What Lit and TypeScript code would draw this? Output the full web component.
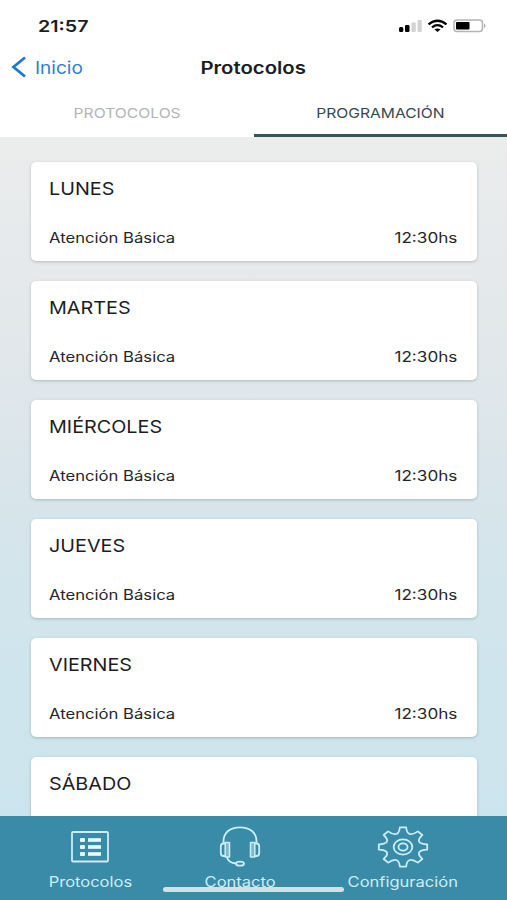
import { LitElement, html, css, svg, nothing } from "lit";
import { customElement } from "lit/decorators.js";

interface Day { name: string; plan?: string; time?: string }

const plan = "Atención Básica";
const time = "12:30hs";
const DAYS: Day[] = [
  { name: "LUNES", plan, time },
  { name: "MARTES", plan, time },
  { name: "MIÉRCOLES", plan, time },
  { name: "JUEVES", plan, time },
  { name: "VIERNES", plan, time },
  { name: "SÁBADO" },
];

/* Outline of an eight-toothed gear centred on the origin. */
function gearPath(): string {
  const at = (x: number, y: number, turn: number) => {
    const a = (turn * Math.PI) / 4;
    const px = x * Math.cos(a) - y * Math.sin(a);
    const py = x * Math.sin(a) + y * Math.cos(a);
    return `${px.toFixed(2)} ${py.toFixed(2)}`;
  };
  let d = `M${at(-3, -22.8, 0)}`;
  for (let i = 0; i < 8; i++) {
    d += `L${at(3, -22.8, i)}C${at(3.6, -14.2, i)} ${at(-3.6, -14.2, i + 1)} ${at(-3, -22.8, i + 1)}`;
  }
  return d + "Z";
}

const listIcon = svg`<svg class="icon" width="40" height="34" viewBox="0 0 40 34">
  <rect x="2" y="2" width="36" height="29.5" rx="1"/>
  <g class="solid"><rect x="10" y="8" width="5" height="4" rx="1"/><rect x="10" y="15" width="5" height="4" rx="1"/><rect x="10" y="22" width="5" height="4" rx="1"/>
  <rect x="18" y="8.2" width="13" height="3.6"/><rect x="18" y="15.2" width="13" height="3.6"/><rect x="18" y="22.2" width="13" height="3.6"/></g>
</svg>`;

const headsetIcon = svg`<svg class="icon" width="42" height="42" viewBox="0 0 42 42">
  <path d="M4.500 17V15.500C4.500 6.500 11 1.300 21 1.300S37.500 6.500 37.500 15.500V17"/>
  <path d="M6 17.500H4.500Q1.800 17.500 1.800 20.500V27Q1.800 30 4.500 30H6M36 17.500H37.500Q40.200 17.500 40.200 20.500V27Q40.200 30 37.500 30H36"/>
  <path class="pad" d="M6.200 16.500H10.500V31H6.200ZM35.800 16.500H31.500V31H35.800Z"/>
  <path d="M8 31.500Q9.500 37 17 37.500"/><ellipse cx="21" cy="37.700" rx="4" ry="2"/>
</svg>`;

const gearIcon = svg`<svg class="icon" width="52" height="42" viewBox="-24.500 -24.500 49 49" preserveAspectRatio="none">
  <path d=${gearPath()}/><circle r="8.800"/><circle r="4.300"/>
</svg>`;

@customElement("app-root")
export class AppRoot extends LitElement {
  static styles = css`
    :host { display: flex; flex-direction: column; height: 900px; overflow: hidden; background: #fff;
      font-family: Inter, "Liberation Sans", sans-serif; color: #1c1d1f; }
    .t { display: inline-block; white-space: nowrap; }
    .left { transform-origin: left; }
    .right { transform-origin: right; }
    .status { display: flex; justify-content: space-between; align-items: center; height: 52px; flex: none;
      box-sizing: border-box; padding: 0 20px 0 38px; font-size: 16.5px; font-weight: 600; }
    .status .t { transform: scaleX(1.19); }
    .signals { display: flex; }
    .nav { display: grid; grid-template-columns: 1fr auto 1fr; align-items: center; height: 30px; flex: none; padding: 0 11px; }
    .back { display: flex; align-items: center; gap: 7.5px; color: #2f7fd0; font-size: 17px; }
    .back .t { transform: scaleX(1.12); padding-top: 1px; }
    .title { font-size: 17px; font-weight: 600; padding-top: 1px; }
    .title .t { transform: scaleX(1.195); }
    .tabs { display: grid; grid-template-columns: 1fr 1fr; height: 55px; flex: none; font-size: 13.5px; }
    .tab { display: flex; justify-content: center; align-items: center; color: #b3b5b6; border-bottom: 3px solid transparent; padding-top: 9px; }
    .tab .t { transform: scaleX(1.16); }
    .tab.on { color: #34494c; border-color: #35565b; }
    .list { flex: 1; min-height: 0; overflow: hidden; display: flex; flex-direction: column; gap: 20px; padding: 25.4px 30.5px 0;
      background: linear-gradient(180deg, #ebecec 0%, #e3e8eb 28%, #d9e5eb 50%, #cfe5ed 78%, #cce4ed 100%); }
    .card { flex: none; height: 99px; box-sizing: border-box; border-radius: 5px; background: #fff; padding: 14.2px 19px 0 18.5px;
      box-shadow: 0 1px 3px rgba(60, 80, 90, .3); display: flex; flex-direction: column; }
    .day { font-size: 17.5px; line-height: 24px; height: 49.6px; }
    .day .t { transform: scaleX(1.13); }
    .row { display: flex; justify-content: space-between; font-size: 14px; line-height: 24px; color: #252627; }
    .row .left { transform: scaleX(1.19); }
    .row .right { transform: scaleX(1.225); }
    .bar { position: relative; flex: none; height: 84px; box-sizing: border-box; background: #3a8ba7; color: #cdeef6;
      display: grid; grid-template-columns: 84px 72px 110px; justify-content: space-between; padding: 9px 49px 0 48px; font-size: 14px; }
    .item { display: flex; flex-direction: column; align-items: center; }
    .glyph { height: 43px; display: flex; align-items: center; }
    .item .t { line-height: 28px; transform: scaleX(1.18); }
    .icon { fill: none; stroke: #c9eef7; stroke-width: 1.8; stroke-linejoin: round; stroke-linecap: round; }
    .icon * { vector-effect: non-scaling-stroke; }
    .pad { fill: #7fb6c9; stroke-width: 1.5; }
    .solid { fill: #e8fbff; stroke: none; }
    .home { position: absolute; left: 163px; bottom: 8px; width: 181px; height: 5px; border-radius: 3px; background: #d5dfe6; }
  `;

  render() {
    return html`
      <div class="status">
        <span class="t left">21:57</span>
        <svg class="signals" width="88" height="16" viewBox="0 0 88 16">
          <rect x="0" y="9" width="4.300" height="5" rx="1.500"/><rect x="6" y="7" width="4.500" height="7" rx="1.300"/>
          <rect x="12.500" y="4.500" width="4.300" height="9.500" rx="1" fill="#d3d3d3"/><rect x="18.500" y="2" width="4.300" height="12" rx="1" fill="#d3d3d3"/>
          <path d="M29.500 6.300Q38.500-.8 47.500 6.300M33 9.300Q38.500 5 44 9.300" fill="none" stroke="#000" stroke-width="2.300"/>
          <path d="M35.500 11.500Q38.500 9.300 41.500 11.500L38.500 14Z"/>
          <rect x="55" y="2" width="28.500" height="11.500" rx="3" fill="none" stroke="#b4b4b4" stroke-width="1.500"/>
          <rect x="57" y="4" width="13.500" height="7.500" rx="1"/><path d="M85 5.500Q88 7.800 85 10Z" fill="#aaa"/>
        </svg>
      </div>
      <div class="nav">
        <div class="back">
          <svg width="16" height="22" viewBox="0 0 16 22"><path d="M14 1.500L2.500 11L14 20.500" fill="none" stroke="#1d78d4" stroke-width="2.800"/></svg>
          <span class="t left">Inicio</span>
        </div>
        <div class="title"><span class="t">Protocolos</span></div>
      </div>
      <div class="tabs">
        <div class="tab"><span class="t">PROTOCOLOS</span></div>
        <div class="tab on"><span class="t">PROGRAMACIÓN</span></div>
      </div>
      <div class="list">
        ${DAYS.map((day) => html`<div class="card">
          <div class="day"><span class="t left">${day.name}</span></div>
          ${day.plan
            ? html`<div class="row"><span class="t left">${day.plan}</span><span class="t right">${day.time}</span></div>`
            : nothing}
        </div>`)}
      </div>
      <div class="bar">
        <div class="item"><div class="glyph">${listIcon}</div><span class="t">Protocolos</span></div>
        <div class="item"><div class="glyph">${headsetIcon}</div><span class="t">Contacto</span></div>
        <div class="item"><div class="glyph">${gearIcon}</div><span class="t">Configuración</span></div>
        <div class="home"></div>
      </div>`;
  }
}
